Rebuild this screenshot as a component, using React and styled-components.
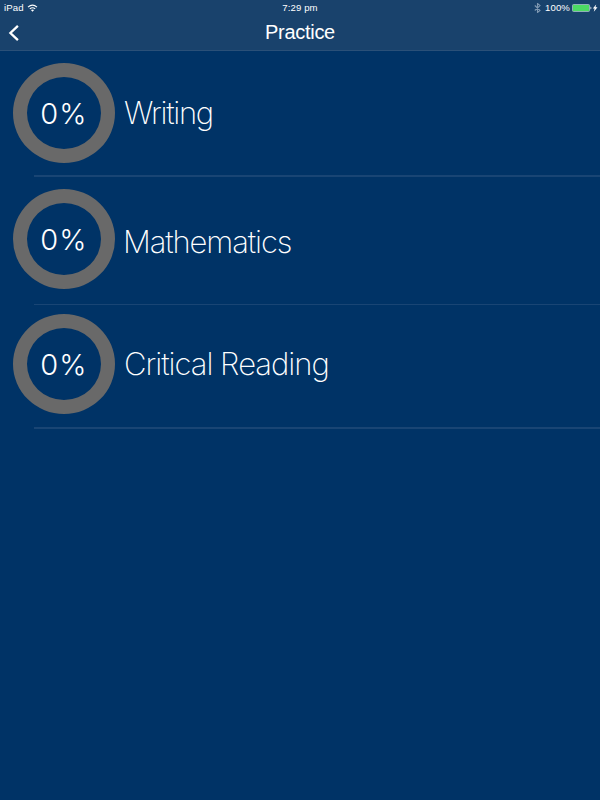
import styled, { createGlobalStyle } from 'styled-components';

const GlobalStyle = createGlobalStyle`
	body {
		margin: 0;
		background-color: #003366;
		color: #fff;
		font-family: 'Liberation Sans', Arial, sans-serif;
	}
`;

const Screen = styled.div`
	width: 600px;
	height: 800px;
	overflow: hidden;
	background-color: #003366;
`;

const Header = styled.header`
	box-sizing: border-box;
	height: 51px;
	border-bottom: 1px solid #2a5078;
	background-color: #19426c;
`;

const StatusBar = styled.div`
	display: grid;
	grid-template-columns: 1fr auto 1fr;
	align-items: center;
	height: 16px;
	padding: 0 2px 0 4px;
	font-size: 9.6px;
	line-height: 16px;
	letter-spacing: 0.1px;
`;

const StatusGroup = styled.div`
	display: flex;
	align-items: center;
	justify-content: ${props => (props.$end ? 'flex-end' : 'flex-start')};
	& svg {
		display: block;
	}
`;

const Time = styled.span`
	padding-right: 2px;
`;

const Wifi = styled.svg`
	margin-left: 3px;
`;

const Bluetooth = styled.svg`
	margin-right: 4px;
`;

const Battery = styled.svg`
	margin-left: 2px;
`;

const NavBar = styled.div`
	display: grid;
	grid-template-columns: 1fr auto 1fr;
	align-items: center;
	height: 34px;
	padding: 0 8px;
`;

const BackButton = styled.button`
	display: flex;
	width: 12px;
	padding: 0;
	border: 0;
	background: none;
`;

const HaEins = styled.h1`
	margin: 0;
	padding-bottom: 2px;
	font-size: 20px;
	font-weight: 400;
	line-height: 32px;
	letter-spacing: -0.3px;
`;

const List = styled.ul`
	margin: 0;
	padding: 0;
	list-style: none;
`;

const Row = styled.li`
	display: flex;
	align-items: flex-start;
	box-sizing: border-box;
	height: ${props => props.$height}px;
	padding: ${props => props.$top}px 0 0 13px;
	background: linear-gradient(#194574, #194574) 100% 100% / 566px ${props => props.$line}px no-repeat;
`;

const Ring = styled.div`
	display: flex;
	align-items: center;
	justify-content: center;
	box-sizing: border-box;
	width: 102px;
	height: 100px;
	padding: 2px 0 0 0;
	border: 14px solid #696969;
	border-radius: 50%;
	font-family: Inter, 'Liberation Sans', sans-serif;
	font-size: 29px;
	font-weight: 300;
	line-height: 34px;
	letter-spacing: 1.2px;
	white-space: nowrap;
`;

const Subject = styled.h2`
	margin: ${props => props.$drop}px 0 0 ${props => props.$left}px;
	font-family: Inter, 'Liberation Sans', sans-serif;
	font-size: 31px;
	font-weight: 200;
	line-height: 40px;
	letter-spacing: ${props => props.$spacing}px;
	white-space: nowrap;
`;

const arrSubjects = [
	{ name: 'Writing', height: 126, top: 12, line: 2, drop: 30, left: 9, spacing: -1.3 },
	{ name: 'Mathematics', height: 128, top: 11.5, line: 1, drop: 33.5, left: 8, spacing: -1.1 },
	{ name: 'Critical Reading', height: 124, top: 9.4, line: 2, drop: 29.6, left: 9, spacing: -1 },
];

export default function App() {
	return (
		<Screen>
			<GlobalStyle />
			<Header>
				<StatusBar>
					<StatusGroup>
						iPad
						<Wifi width="11" height="8" viewBox="0 0 11 8" fill="none" stroke="#fff">
							<path d="M1 3.1Q5.5-.9 10 3.1" strokeWidth="1.2" />
							<path d="M2.8 4.9Q5.5 2.6 8.2 4.9" strokeWidth="1.2" />
							<path d="M3.9 6Q5.5 4.8 7.1 6L5.5 7.7Z" fill="#fff" stroke="none" />
						</Wifi>
					</StatusGroup>
					<Time>7:29 pm</Time>
					<StatusGroup $end>
						<Bluetooth width="7" height="10" viewBox="0 0 7 10" fill="none" stroke="#7f98b2">
							<path d="M.8 2.5L6 7.4L3.5 9.5V.5L6 2.6L.8 7.5" strokeWidth="1.1" />
						</Bluetooth>
						100%
						<Battery width="20" height="8" viewBox="0 0 20 8">
							<rect x=".5" y=".5" width="17" height="7" rx="1" fill="#4cd964" stroke="#9bb4c2" strokeWidth=".9" />
							<path d="M18.5 2.5Q20.3 4 18.5 5.5Z" fill="#fff" />
						</Battery>
						<svg width="6" height="8" viewBox="0 0 6 8" fill="#fff">
							<path d="M4.2 .4L.8 4.6H2.6L1.8 7.7L5.5 3.3H3.5Z" />
						</svg>
					</StatusGroup>
				</StatusBar>
				<NavBar>
					<BackButton aria-label="Back">
						<svg width="12" height="18" viewBox="0 0 12 18" fill="none" stroke="#fff">
							<path d="M9.9 1.8L2.4 9L9.9 16.2" strokeWidth="2.3" />
						</svg>
					</BackButton>
					<HaEins>Practice</HaEins>
				</NavBar>
			</Header>
			<List>
				{arrSubjects.map(item => {
					return (
						<Row key={item.name} $height={item.height} $top={item.top} $line={item.line}>
							<Ring>0%</Ring>
							<Subject $drop={item.drop} $left={item.left} $spacing={item.spacing}>
								{item.name}
							</Subject>
						</Row>
					);
				})}
			</List>
		</Screen>
	);
}
